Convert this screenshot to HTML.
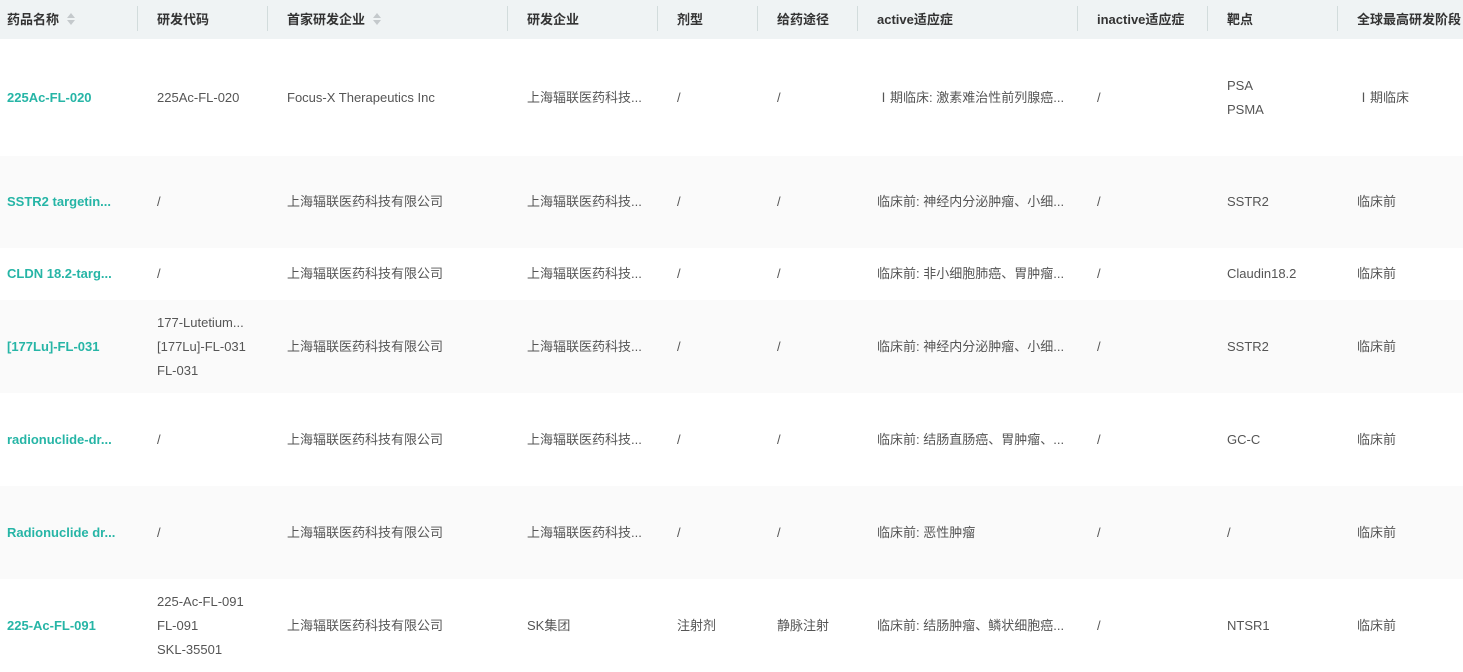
<!DOCTYPE html>
<html><head><meta charset="utf-8"><style>
*{margin:0;padding:0;box-sizing:border-box}
body{width:1463px;height:660px;overflow:hidden;background:#fff;font-family:"Liberation Sans","Noto Sans CJK SC",sans-serif;font-size:13px;color:#555}
.r{display:flex;position:relative}
.h{height:39px;background:#eff3f4;font-weight:bold;color:#333}
.c{flex:none;display:flex;flex-direction:column;justify-content:center;padding-left:20px;line-height:24px;white-space:nowrap;overflow:hidden;position:relative}
.c:first-child{padding-left:7px}
.h .c:not(:first-child)::before{content:"";position:absolute;left:0;top:6px;height:25px;width:1px;background:#d2dcdc}
.g{background:#fafafa}
.n{color:#26b5a6;font-weight:bold}
.s{display:inline-block;vertical-align:middle;margin-left:8px;width:9px;height:12px;position:relative;top:-1px}
.s::before,.s::after{content:"";position:absolute;left:0;border-left:4.5px solid transparent;border-right:4.5px solid transparent}
.s::before{top:0;border-bottom:5px solid #c4c9cc}
.s::after{bottom:0;border-top:5px solid #c4c9cc}
</style></head><body>
<div class="r h">
<div class="c" style="width:137px"><span>药品名称<i class="s"></i></span></div>
<div class="c" style="width:130px">研发代码</div>
<div class="c" style="width:240px"><span>首家研发企业<i class="s"></i></span></div>
<div class="c" style="width:150px">研发企业</div>
<div class="c" style="width:100px">剂型</div>
<div class="c" style="width:100px">给药途径</div>
<div class="c" style="width:220px">active适应症</div>
<div class="c" style="width:130px">inactive适应症</div>
<div class="c" style="width:130px">靶点</div>
<div class="c" style="width:126px">全球最高研发阶段</div>
</div>
<div class="r" style="height:117px">
<div class="c n" style="width:137px">225Ac-FL-020</div>
<div class="c" style="width:130px">225Ac-FL-020</div>
<div class="c" style="width:240px">Focus-X Therapeutics Inc</div>
<div class="c" style="width:150px">上海辐联医药科技...</div>
<div class="c" style="width:100px">/</div>
<div class="c" style="width:100px">/</div>
<div class="c" style="width:220px">Ⅰ期临床: 激素难治性前列腺癌...</div>
<div class="c" style="width:130px">/</div>
<div class="c" style="width:130px"><div>PSA</div><div>PSMA</div></div>
<div class="c" style="width:126px">Ⅰ期临床</div>
</div>
<div class="r g" style="height:92px">
<div class="c n" style="width:137px">SSTR2 targetin...</div>
<div class="c" style="width:130px">/</div>
<div class="c" style="width:240px">上海辐联医药科技有限公司</div>
<div class="c" style="width:150px">上海辐联医药科技...</div>
<div class="c" style="width:100px">/</div>
<div class="c" style="width:100px">/</div>
<div class="c" style="width:220px">临床前: 神经内分泌肿瘤、小细...</div>
<div class="c" style="width:130px">/</div>
<div class="c" style="width:130px">SSTR2</div>
<div class="c" style="width:126px">临床前</div>
</div>
<div class="r" style="height:52px">
<div class="c n" style="width:137px">CLDN 18.2-targ...</div>
<div class="c" style="width:130px">/</div>
<div class="c" style="width:240px">上海辐联医药科技有限公司</div>
<div class="c" style="width:150px">上海辐联医药科技...</div>
<div class="c" style="width:100px">/</div>
<div class="c" style="width:100px">/</div>
<div class="c" style="width:220px">临床前: 非小细胞肺癌、胃肿瘤...</div>
<div class="c" style="width:130px">/</div>
<div class="c" style="width:130px">Claudin18.2</div>
<div class="c" style="width:126px">临床前</div>
</div>
<div class="r g" style="height:93px">
<div class="c n" style="width:137px">[177Lu]-FL-031</div>
<div class="c" style="width:130px"><div>177-Lutetium...</div><div>[177Lu]-FL-031</div><div>FL-031</div></div>
<div class="c" style="width:240px">上海辐联医药科技有限公司</div>
<div class="c" style="width:150px">上海辐联医药科技...</div>
<div class="c" style="width:100px">/</div>
<div class="c" style="width:100px">/</div>
<div class="c" style="width:220px">临床前: 神经内分泌肿瘤、小细...</div>
<div class="c" style="width:130px">/</div>
<div class="c" style="width:130px">SSTR2</div>
<div class="c" style="width:126px">临床前</div>
</div>
<div class="r" style="height:93px">
<div class="c n" style="width:137px">radionuclide-dr...</div>
<div class="c" style="width:130px">/</div>
<div class="c" style="width:240px">上海辐联医药科技有限公司</div>
<div class="c" style="width:150px">上海辐联医药科技...</div>
<div class="c" style="width:100px">/</div>
<div class="c" style="width:100px">/</div>
<div class="c" style="width:220px">临床前: 结肠直肠癌、胃肿瘤、...</div>
<div class="c" style="width:130px">/</div>
<div class="c" style="width:130px">GC-C</div>
<div class="c" style="width:126px">临床前</div>
</div>
<div class="r g" style="height:93px">
<div class="c n" style="width:137px">Radionuclide dr...</div>
<div class="c" style="width:130px">/</div>
<div class="c" style="width:240px">上海辐联医药科技有限公司</div>
<div class="c" style="width:150px">上海辐联医药科技...</div>
<div class="c" style="width:100px">/</div>
<div class="c" style="width:100px">/</div>
<div class="c" style="width:220px">临床前: 恶性肿瘤</div>
<div class="c" style="width:130px">/</div>
<div class="c" style="width:130px">/</div>
<div class="c" style="width:126px">临床前</div>
</div>
<div class="r" style="height:93px">
<div class="c n" style="width:137px">225-Ac-FL-091</div>
<div class="c" style="width:130px"><div>225-Ac-FL-091</div><div>FL-091</div><div>SKL-35501</div></div>
<div class="c" style="width:240px">上海辐联医药科技有限公司</div>
<div class="c" style="width:150px">SK集团</div>
<div class="c" style="width:100px">注射剂</div>
<div class="c" style="width:100px">静脉注射</div>
<div class="c" style="width:220px">临床前: 结肠肿瘤、鳞状细胞癌...</div>
<div class="c" style="width:130px">/</div>
<div class="c" style="width:130px">NTSR1</div>
<div class="c" style="width:126px">临床前</div>
</div>
</body></html>
